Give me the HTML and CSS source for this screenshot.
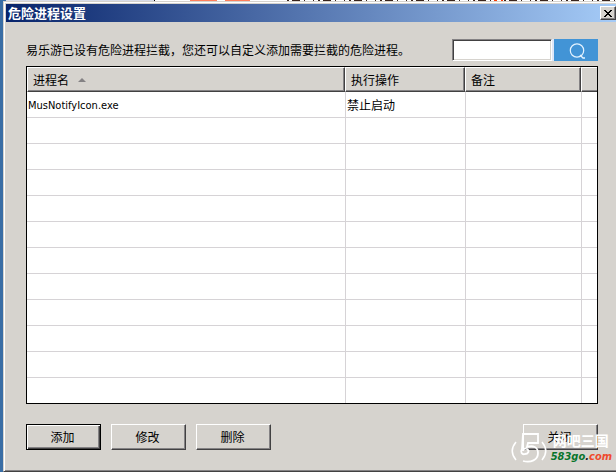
FILE: index.html
```html
<!DOCTYPE html>
<html lang="zh-CN">
<head>
<meta charset="utf-8">
<title>危险进程设置</title>
<link rel="stylesheet" href="styles.css">
</head>
<body>
<div class="backdrop" aria-hidden="true"></div>
<main class="window">
  <header class="titlebar">
    <h1 class="title">危险进程设置</h1>
    <button class="close" type="button" aria-label="关闭窗口">
      <svg width="8" height="7" viewBox="0 0 8 7" shape-rendering="crispEdges"><path d="M0 0h2v1h1v1h2v-1h1v-1h2v1h-1v1h-1v1h-1v1h1v1h1v1h1v1h-2v-1h-1v-1h-2v1h-1v1h-2v-1h1v-1h1v-1h1v-1h-1v-1h-1v-1h-1z"/></svg>
    </button>
  </header>
  <div class="content">
    <form class="toolbar">
      <label class="hint" for="search">易乐游已设有危险进程拦截，您还可以自定义添加需要拦截的危险进程。</label>
      <input class="search" id="search" type="text">
      <button class="search-button" type="button" aria-label="搜索">
        <svg width="16" height="16" viewBox="0 0 16 16" fill="none" stroke="#e4f3ff"><circle cx="8" cy="7.5" r="6.7" stroke-width="1.2"/><path d="M11 12l3 3h2" stroke-width="1.300"/></svg>
      </button>
    </form>
    <div class="list">
      <table class="grid">
        <colgroup><col><col class="col-action"><col class="col-note"><col class="col-end"></colgroup>
        <thead>
          <tr><th>进程名<span class="sort"></span></th><th>执行操作</th><th>备注</th><th></th></tr>
        </thead>
        <tbody>
          <tr><td class="file">MusNotifyIcon.exe</td><td>禁止启动</td><td></td><td></td></tr>
          <tr><td></td><td></td><td></td><td></td></tr>
          <tr><td></td><td></td><td></td><td></td></tr>
          <tr><td></td><td></td><td></td><td></td></tr>
          <tr><td></td><td></td><td></td><td></td></tr>
          <tr><td></td><td></td><td></td><td></td></tr>
          <tr><td></td><td></td><td></td><td></td></tr>
          <tr><td></td><td></td><td></td><td></td></tr>
          <tr><td></td><td></td><td></td><td></td></tr>
          <tr><td></td><td></td><td></td><td></td></tr>
          <tr><td></td><td></td><td></td><td></td></tr>
          <tr><td></td><td></td><td></td><td></td></tr>
        </tbody>
      </table>
    </div>
    <footer class="actions">
      <button class="button button-default" type="button">添加</button>
      <button class="button" type="button">修改</button>
      <button class="button" type="button">删除</button>
      <button class="button button-end" type="button">关闭</button>
    </footer>
  </div>
  <div class="watermark">
    <svg width="36" height="32" viewBox="0 0 36 32" fill="none" stroke="#fff"><path d="M5 10c-5 6-5 12 0 18M31 10c5 6 5 12 0 18" stroke-width="1.500"/><path d="M11 17L12 2h15v9H17l-1 4c6-2 11 0 11 6 0 7-7 10-15 8M11 17c-2 3 0 6 3 5 3 0 5-3 2-5-2-1-4 0-4 2" stroke-width="1.800"/></svg>
    <div class="brand">
      <span class="brand-name">网吧三国</span>
      <span class="brand-site">583go<span class="brand-dot">.</span><span class="brand-tld">com</span></span>
    </div>
  </div>
</main>
</body>
</html>
```
FILE: styles.css
```css
* { box-sizing: border-box; }

body {
  display: flex;
  flex-direction: column;
  min-height: 100vh;
  margin: 0;
  overflow: hidden;
  background: #3a6ea5;
  color: #000;
  font: 12px/16px "Noto Sans", "Noto Sans CJK SC", sans-serif;
}

button, input { font: inherit; color: inherit; border-radius: 0; }

.backdrop {
  height: 1px;
  background:
    linear-gradient(90deg, #3a6ea5 6px, #d8dce8 6px 154px, #000 154px 155px, #fff 155px 190px, #ff7f5c 190px 217px, #fff 217px 225px, #ff7f5c 225px 250px, #fff 250px) 0 0 / 286px 1px no-repeat,
    linear-gradient(90deg, transparent 494px, #f73c08 494px 497px, #fff 497px 501px, #f73c08 501px 503px, transparent 503px),
    repeating-linear-gradient(90deg, #fff 0 3px, #39241c 3px 4px, #fff 4px 8px, #39241c 8px 10px, #fff 10px 13px, #39241c 13px 21px, #fff 21px 25px, #39241c 25px 26px, #fff 26px 31px);
}

.window {
  position: relative;
  flex: 1;
  display: flex;
  flex-direction: column;
  margin-left: 3px;
  padding: 1px 0 0 1px;
  background: #d6d3ce;
  border: solid;
  border-width: 1px 0 1px 1px;
  border-color: #d6d3ce #d6d3ce #424142;
  box-shadow: inset 1px 1px #fff, inset 0 -1px #848284;
}

.titlebar {
  display: flex;
  align-items: center;
  justify-content: space-between;
  height: 18px;
  margin: 1px 0 0 1px;
  padding-left: 2px;
  background: linear-gradient(90deg, #08246b, #a5cbf7);
}

.title {
  margin: 0;
  color: #fff;
  font-size: 13px;
  line-height: 18px;
}

.close {
  display: flex;
  align-items: center;
  justify-content: center;
  width: 16px;
  height: 14px;
  padding: 0;
  background: #d6d3ce;
  border: 1px solid;
  border-color: #fff #424142 #424142 #fff;
  box-shadow: inset -1px -1px #848284;
}

.content { padding: 17px 18px 0 21px; }

.toolbar {
  display: flex;
  align-items: center;
  height: 22px;
  margin-bottom: 5px;
}

.hint { flex: 1; padding-top: 2px; white-space: nowrap; }

.search {
  width: 100px;
  height: 22px;
  padding: 2px 4px;
  background: #fff;
  border: 1px solid;
  border-color: #848284 #fff #fff #848284;
  box-shadow: inset 1px 1px #424142, inset -1px -1px #d6d3ce;
}

.search-button {
  display: flex;
  align-items: center;
  justify-content: center;
  width: 46px;
  height: 22px;
  padding: 2px 0 0 2px;
  background: #4294d6;
  border: solid #dee7f7;
  border-width: 0 0 0 2px;
}

.list { background: #fff; border: 1px solid #000; }

.grid {
  width: 100%;
  table-layout: fixed;
  border-collapse: separate;
  border-spacing: 0;
}

.col-action { width: 120px; }
.col-note { width: 116px; }
.col-end { width: 16px; }

th {
  height: 25px;
  padding: 2px 5px 0;
  background: #d6d3ce;
  border: 1px solid;
  border-color: #fff #424142 #424142 #fff;
  box-shadow: inset -1px -1px #848284;
  font-weight: normal;
  text-align: left;
}

th:last-child, td:last-child { padding: 0; }
th:last-child { border-right: 0; box-shadow: inset 0 -1px #848284; }

.sort {
  display: inline-block;
  margin-left: 9px;
  border: solid transparent;
  border-width: 0 4px 4px;
  border-bottom-color: #848284;
  vertical-align: 3px;
}

td {
  height: 26px;
  padding: 2px 1px 0;
  border-bottom: 1px solid #d6d3d6;
}

td + td { border-left: 1px solid #d6d3d6; }
tr:last-child td { height: 25px; border-bottom: 0; }
.file { font-family: "DejaVu Sans Condensed", "DejaVu Sans", sans-serif; font-size: 11px; }

.actions {
  display: flex;
  gap: 10px;
  margin-top: 20px;
}

.button {
  width: 75px;
  height: 26px;
  padding: 2px 2px 0 0;
  background: #d6d3ce;
  border: 1px solid;
  border-color: #fff #424142 #424142 #fff;
  box-shadow: inset -1px -1px #848284;
}

.button-default {
  border-color: #000;
  box-shadow: inset 1px 1px #fff, inset -1px -1px #424142, inset -2px -2px #848284;
}

.button-end { margin-left: auto; }

.watermark {
  position: absolute;
  right: 4px;
  bottom: 7px;
  display: flex;
  align-items: center;
  gap: 4px;
  pointer-events: none;
}

.brand { display: flex; flex-direction: column; }
.brand-name { padding-left: 2px; color: #fff; font-size: 14px; font-weight: bold; line-height: 18px; }
.brand-site { color: #08752c; font: italic bold 11px/14px "DejaVu Sans Condensed", "DejaVu Sans", sans-serif; }
.brand-dot { color: #222; }
.brand-tld { color: #ef4a2e; }
```
